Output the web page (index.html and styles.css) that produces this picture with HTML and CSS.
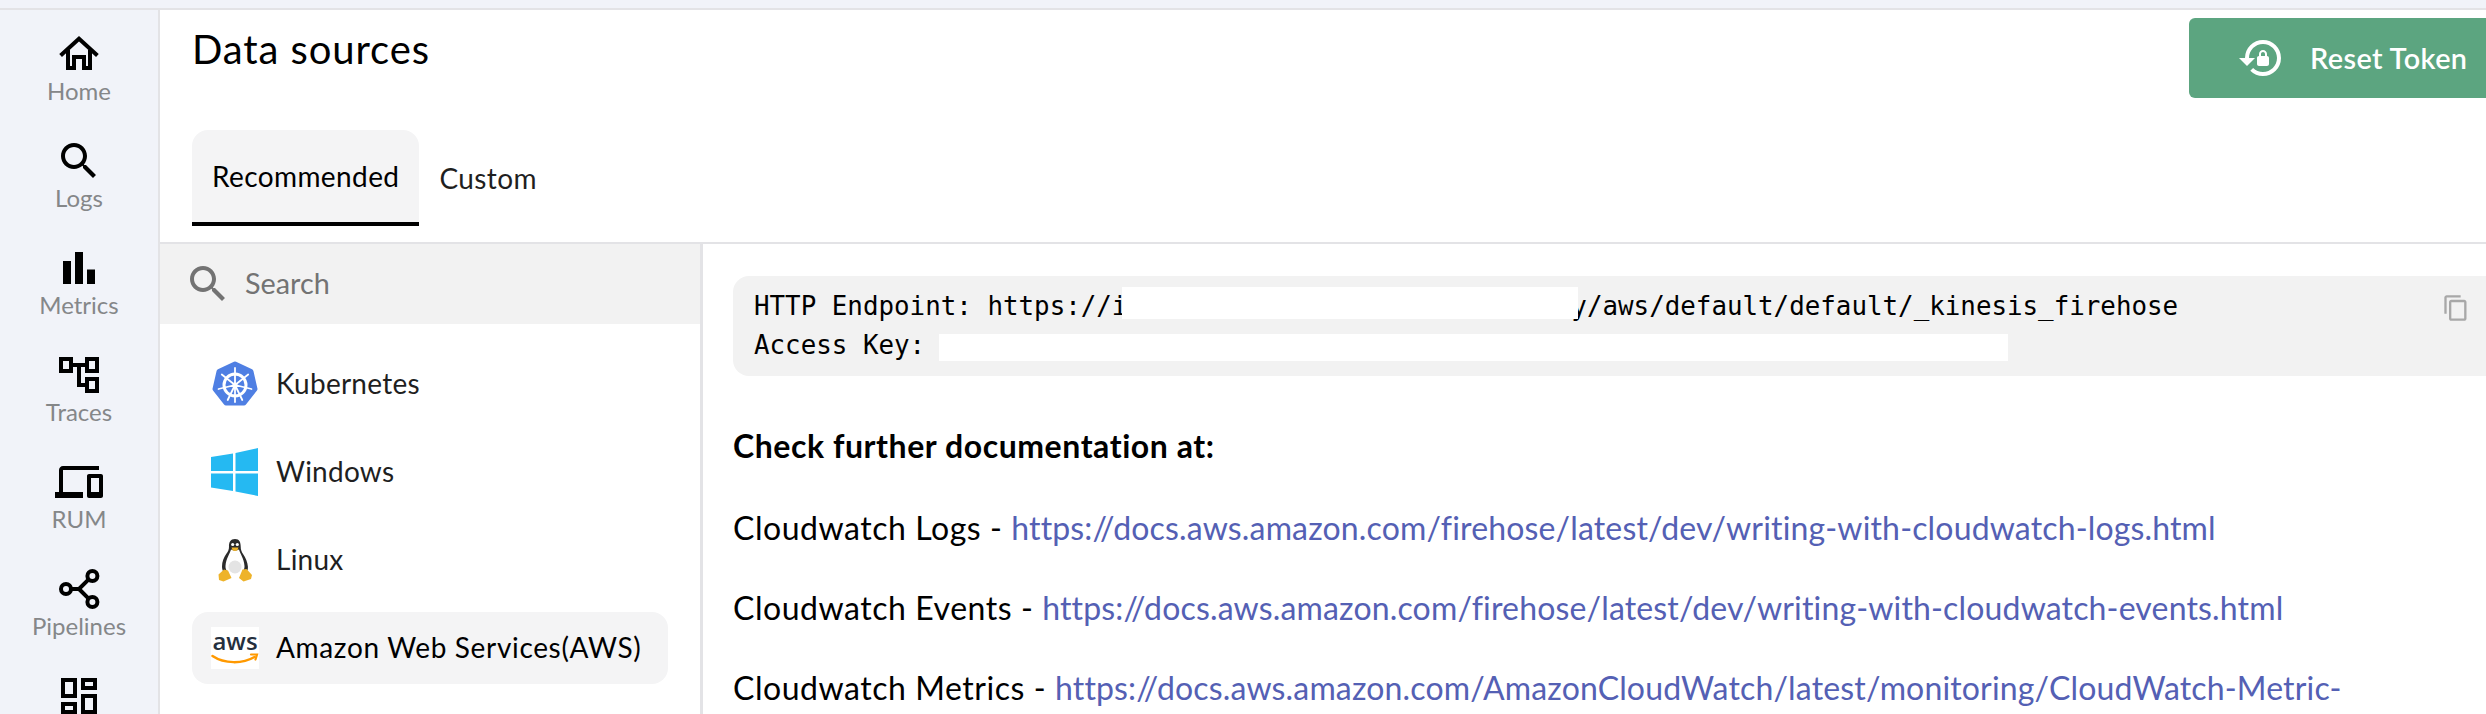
FILE: index.html
```html
<!DOCTYPE html>
<html lang="en">
<head>
<meta charset="utf-8">
<title>Data sources</title>
<link rel="stylesheet" href="styles.css">
</head>
<body>
<div class="topstrip"></div>
<div class="app">
  <nav class="rail">
    <a class="rail-item"><svg class="rail-icon" viewBox="0 0 24 24"><path fill="none" stroke="#000" stroke-width="2" d="M2.800 12.800 12 4.400l9.200 8.400M6.500 10v9h3v-5.500h5V19h3v-9"/></svg><span>Home</span></a>
    <a class="rail-item"><svg class="rail-icon" viewBox="0 0 24 24"><path d="M15.500 14h-.79l-.28-.27C15.410 12.590 16 11.110 16 9.500 16 5.910 13.090 3 9.500 3S3 5.910 3 9.500 5.910 16 9.500 16c1.610 0 3.090-.59 4.230-1.570l.27.28v.79l5 4.990L20.490 19l-4.990-5zm-6 0C7.010 14 5 11.990 5 9.500S7.010 5 9.500 5 14 7.010 14 9.500 11.990 14 9.500 14z"/></svg><span>Logs</span></a>
    <a class="rail-item"><svg class="rail-icon" viewBox="0 0 24 24"><path d="M4 8.500h4V20H4zM10 4h4v16h-4zM16 12.700h4V20h-4z"/></svg><span>Metrics</span></a>
    <a class="rail-item"><svg class="rail-icon" viewBox="0 0 24 24"><path d="M22 11V3h-7v3H9V3H2v8h7V8h2v10h4v3h7v-8h-7v3h-2V8h2v3h7zM7 9H4V5h3v4zm10 6h3v4h-3v-4zm0-10h3v4h-3V5z"/></svg><span>Traces</span></a>
    <a class="rail-item"><svg class="rail-icon" viewBox="0 0 24 24"><path d="M4 6h18V4H4c-1.100 0-2 .9-2 2v11H0v3h14v-3H4V6zm19 2h-6c-.55 0-1 .45-1 1v10c0 .55.45 1 1 1h6c.55 0 1-.45 1-1V9c0-.55-.45-1-1-1zm-1 9h-4v-7h4v7z"/></svg><span>RUM</span></a>
    <a class="rail-item"><svg class="rail-icon" viewBox="0 0 24 24"><g fill="none" stroke="#000" stroke-width="2"><circle cx="5.500" cy="12" r="2.500"/><circle cx="18.700" cy="5.500" r="2.500"/><circle cx="18.700" cy="18.500" r="2.500"/><path d="M8 12h4l4.700-4.700M12 12l4.700 4.700"/></g></svg><span>Pipelines</span></a>
    <a class="rail-item"><svg class="rail-icon" viewBox="0 0 24 24"><path d="M19 5v2h-4V5h4M9 5v6H5V5h4m10 8v6h-4v-6h4M9 17v2H5v-2h4M21 3h-8v6h8V3zM11 3H3v10h8V3zm10 8h-8v10h8V11zm-10 4H3v6h8v-6z"/></svg></a>
  </nav>
  <main class="main">
    <header class="head">
      <h1 class="title">Data sources</h1>
      <button class="reset"><svg class="reset-icon" viewBox="0 0 24 24"><path fill="#fff" d="M13 3a9 9 0 0 0-9 9H1l4 4 4-4H6c0-3.870 3.130-7 7-7s7 3.130 7 7-3.130 7-7 7c-1.930 0-3.680-.79-4.940-2.060l-1.420 1.420A8.954 8.954 0 0 0 13 21a9 9 0 0 0 0-18zm2 8v-1c0-1.100-.9-2-2-2s-2 .9-2 2v1c-.55 0-1 .45-1 1v3c0 .55.45 1 1 1h4c.55 0 1-.45 1-1v-3c0-.55-.45-1-1-1zm-1 0h-2v-1c0-.55.45-1 1-1s1 .45 1 1v1z"/></svg>Reset Token</button>
    </header>
    <div class="tabs">
      <a class="tab tab-active">Recommended</a>
      <a class="tab">Custom</a>
    </div>
    <div class="split">
      <aside class="sources">
        <div class="search"><svg class="search-icon" viewBox="0 0 24 24"><path d="M15.500 14h-.79l-.28-.27C15.410 12.590 16 11.110 16 9.500 16 5.910 13.090 3 9.500 3S3 5.910 3 9.500 5.910 16 9.500 16c1.610 0 3.090-.59 4.230-1.570l.27.28v.79l5 4.990L20.490 19l-4.990-5zm-6 0C7.010 14 5 11.990 5 9.500S7.010 5 9.500 5 14 7.010 14 9.500 11.990 14 9.500 14z"/></svg><span class="search-label">Search</span></div>
        <ul class="list">
          <li class="source">
            <svg class="logo" viewBox="0 0 48 48">
              <path fill="#4f7fe3" stroke="#4f7fe3" stroke-width="5" stroke-linejoin="round" d="M24 4 40 11.500 44 29 33 43H15L4 29 8 11.500z"/>
              <g fill="none" stroke="#fff">
                <circle cx="24" cy="25" r="11" stroke-width="3"/>
                <path stroke-width="1.800" stroke-linecap="round" d="M24 8v34M24 25 10.800 14.500M24 25l13.200-10.500M24 25 7.500 29M24 25l16.500 4M24 25l-7.300 15M24 25l7.300 15"/>
              </g>
              <circle cx="24" cy="25" r="2.500" fill="#fff"/>
            </svg>
            <span class="source-name">Kubernetes</span>
          </li>
          <li class="source">
            <svg class="logo" viewBox="0 0 48 48"><path fill="#25b9f2" d="M0 9 22 5.500V23H0zM24.500 5 47 0V23H24.500zM0 25.500H22V43L0 39.500zM24.500 25.500H47V48L24.500 43.500z"/></svg>
            <span class="source-name">Windows</span>
          </li>
          <li class="source">
            <svg class="logo" viewBox="0 0 48 48">
              <path fill="#2b2b2b" d="M24 3c-4.500 0-6.200 3.500-6 7.500.1 3-.9 5-2.800 7.500-2.400 3.300-4.200 7.800-4.200 12.500 0 2 .5 4 1.500 5.500h23c1.100-1.500 1.600-3.500 1.400-5.500-.4-4.700-2.300-8.800-4.700-12.300-1.700-2.400-2.500-4.700-2.500-7.700C29.700 6.500 28.500 3 24 3z"/>
              <path fill="#fff" d="M20 13.500c2.500 1.500 5.500 1.500 8 0 1 4 5 9 5.500 16.500.3 4-2.500 9-9.500 9s-9.800-5-9.500-9c.5-7.500 4.500-12.500 5.500-16.500z"/>
              <circle cx="24" cy="31" r="6.500" fill="#e4e4e4"/>
              <circle cx="21.700" cy="8.500" r="1.600" fill="#fff"/><circle cx="26.300" cy="8.500" r="1.600" fill="#fff"/>
              <path fill="#eeb32a" d="M20.500 11.500h7l-1 2.800c-1.500 1-3.500 1-5 0zM7.500 38.500l5.500-5 4 1 3.500 7.500-8 3.500-4.500-1.500zM28 42l3.500-8.500 4-.5 5.500 6-1 4-7.500 2.500z"/>
            </svg>
            <span class="source-name">Linux</span>
          </li>
          <li class="source source-active">
            <svg class="logo logo-aws" viewBox="0 0 48 42">
              <rect width="48" height="42" fill="#fff"/>
              <text x="24" y="23" text-anchor="middle" class="aws-text">aws</text>
              <path fill="none" stroke="#f90" stroke-width="2.500" stroke-linecap="round" d="M1.500 29c12 8 30 8 42 1"/>
              <path fill="none" stroke="#f90" stroke-width="2.200" stroke-linecap="round" d="M40 27.500h6l-1.500 5"/>
            </svg>
            <span class="source-name source-name-long">Amazon Web Services(AWS)</span>
          </li>
        </ul>
      </aside>
      <section class="docs">
        <div class="code">
          <svg class="copy" viewBox="0 0 24 24"><path d="M16 1H4c-1.100 0-2 .9-2 2v14h2V3h12V1zm3 4H8c-1.100 0-2 .9-2 2v14c0 1.100.9 2 2 2h11c1.100 0 2-.9 2-2V7c0-1.100-.9-2-2-2zm0 16H8V7h11v14z"/></svg>
          <div class="code-line">HTTP Endpoint: https://i<span class="mask mask-url"></span>y/aws/default/default/_kinesis_firehose</div>
          <div class="code-line">Access Key: <span class="mask mask-key"></span></div>
        </div>
        <p class="further">Check further documentation at:</p>
        <p class="doc">Cloudwatch Logs - <a href="#">https://docs.aws.amazon.com/firehose/latest/dev/writing-with-cloudwatch-logs.html</a></p>
        <p class="doc">Cloudwatch Events - <a href="#">https://docs.aws.amazon.com/firehose/latest/dev/writing-with-cloudwatch-events.html</a></p>
        <p class="doc">Cloudwatch Metrics - <a href="#">https://docs.aws.amazon.com/AmazonCloudWatch/latest/monitoring/CloudWatch-Metric-</a></p>
      </section>
    </div>
  </main>
</div>
</body>
</html>
```
FILE: styles.css
```css
* { box-sizing: border-box; }
html, body { margin: 0; height: 714px; overflow: hidden; background: #fff; }
body { font-family: "Lato", "Noto Sans", sans-serif; color: #000; }
.topstrip { height: 10px; background: #f1f3f9; border-bottom: 2px solid #e3e3e6; }
.app { display: flex; height: 704px; overflow: hidden; }
.rail { flex: 0 0 160px; background: #f1f3f9; border-right: 2px solid #e3e3e6; padding-top: 20px; display: flex; flex-direction: column; align-items: center; overflow: hidden; }
.rail-item { display: flex; flex-direction: column; align-items: center; height: 107px; flex: none; color: #858789; font-size: 24px; line-height: 26px; }
.rail-icon { width: 48px; height: 48px; flex: none; }
.main { flex: 1; min-width: 0; display: flex; flex-direction: column; }
.head { display: flex; justify-content: space-between; align-items: flex-start; height: 120px; padding-left: 32px; }
.title { margin: 14px 0 0; font-size: 40px; letter-spacing: .9px; font-weight: 400; line-height: 50px; }
.reset { display: flex; align-items: center; width: 297px; height: 80px; margin-top: 8px; padding: 0 0 0 48px; border: 0; border-radius: 6px 0 0 6px; background: #5ca580; color: #fff; font: 600 28.800px "Lato", sans-serif; letter-spacing: .4px; }
.reset-icon { width: 48px; height: 48px; margin-right: 25px; flex: none; }
.tabs { display: flex; height: 114px; padding-left: 32px; border-bottom: 2px solid #e3e3e6; }
.tab { display: flex; align-items: center; height: 96px; padding: 0 20px; font-size: 28px; letter-spacing: .4px; color: #1f1f1f; }
.tab-active { color: #000; background: #f4f4f5; border-radius: 16px 16px 0 0; border-bottom: 4px solid #000; }
.split { display: flex; flex: 1; min-height: 0; }
.sources { flex: 0 0 543px; border-right: 3px solid #e3e3e6; }
.search { display: flex; align-items: center; gap: 13px; height: 80px; padding-left: 24px; background: #f2f2f2; color: #737373; font-size: 28.800px; }
.search-icon { width: 48px; height: 48px; fill: #737373; }
.search-label { padding-bottom: 2px; }
.list { list-style: none; margin: 24px 0 0; padding: 0 32px; }
.source { display: flex; align-items: center; height: 72px; margin-bottom: 16px; padding-left: 19px; border-radius: 16px; color: #1f1f1f; font-size: 28px; letter-spacing: .25px; }
.source-name { padding-bottom: 2px; }
.source-name-long { letter-spacing: .66px; }
.source-active { background: #f4f4f5; color: #000; }
.logo { width: 48px; height: 48px; margin-right: 17px; flex: none; }
.logo-aws { height: 42px; overflow: visible; }
.aws-text { font: 600 24px "Open Sans", sans-serif; fill: #252f3e; letter-spacing: 0; }
.docs { flex: 1; min-width: 0; padding: 32px 0 0 30px; overflow: hidden; }
.code { position: relative; height: 100px; padding: 10px 21px; background: #f2f2f2; border-radius: 16px 0 0 16px; font-family: "DejaVu Sans Mono", monospace; font-size: 25.850px; line-height: 40px; }
.code-line { white-space: nowrap; height: 39px; }
.mask { display: inline-block; position: relative; background: #fff; vertical-align: top; }
.mask-url { width: 456px; height: 32px; margin: 1px -6.600px 0 -5.500px; }
.mask-key { width: 1069px; height: 27px; margin: 9px 0 0 -2px; }
.copy { position: absolute; top: 18px; right: 16px; width: 28px; height: 28px; fill: #a8a8a8; }
.further { margin: 50px 0 0; font-size: 32px; font-weight: 700; letter-spacing: .56px; line-height: 40px; }
.doc { margin: 40px 0 0; font-size: 32px; letter-spacing: .55px; line-height: 40px; white-space: nowrap; }
.further + .doc { margin-top: 42px; }
.doc a { color: #5460b4; letter-spacing: .16px; text-decoration: none; }
```
